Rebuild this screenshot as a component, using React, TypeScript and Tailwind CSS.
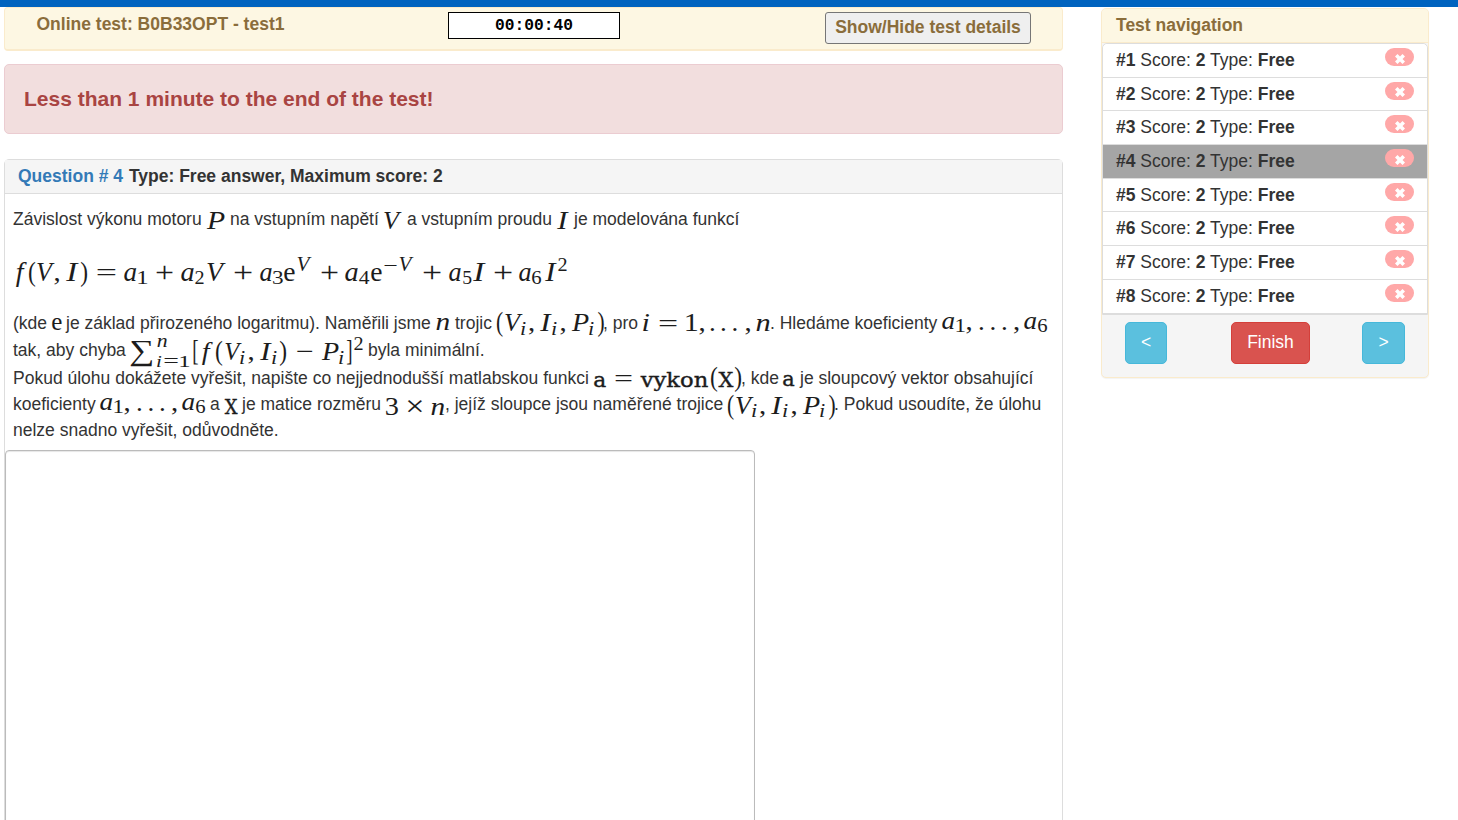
import React from "react";

type Face = "i" | "r" | "t";
/** [characters, left edge, right edge, offset below the row's baseline, font size, face] */
type Glyph = [string, number, number, number, number, Face];
type Segment = { x: number; text?: string; glyphs?: Glyph[] };

/** Ink extents of each character in thousandths of an em: [left, right]. */
const INK: Record<string, [number, number]> = {
  ia: [17, 476], if: [-100, 400], in: [14, 474], ii: [49, 264], iV: [76, 688], iI: [-8, 384], iP: [0, 605],
  re: [25, 424], "r(": [48, 304], "r)": [29, 285], "r[": [88, 299], "r]": [34, 245],
  r1: [111, 394], r2: [30, 475], r3: [43, 431], r4: [12, 472], r5: [32, 438], r6: [34, 468],
  "r,": [56, 195], "r.": [70, 181], "r=": [30, 534], "r+": [30, 534], "r−": [30, 534], "r×": [80, 490],
  "r∑": [14, 695], ta: [40, 590], tX: [20, 690], tvykon: [10, 3010],
};

const FACES: Record<Face, string> = {
  i: "font-['Liberation_Serif',serif] italic",
  r: "font-['Liberation_Serif',serif]",
  t: "font-['DejaVu_Serif',serif] stroke-[#1c1c1c] [stroke-width:0.4]",
};

function Formula({ x, width, glyphs }: { x: number; width: number; glyphs: Glyph[] }) {
  return (
    <svg width={width} height="25" viewBox={`${x} 0 ${width} 25`} className="block shrink-0 overflow-visible fill-[#1c1c1c]">
      {glyphs.map(([t, x0, x1, dy, size, face], i) => {
        const [l, r] = INK[face + t];
        const s = (x1 - x0) / (((r - l) * size) / 1000);
        return (
          <text
            key={i}
            className={FACES[face]}
            fontSize={size}
            transform={`translate(${x0 - (l * size * s) / 1000} ${18.5 + dy}) scale(${s} 1)`}
          >
            {t}
          </text>
        );
      })}
    </svg>
  );
}

function Row({ segments, className }: { segments: Segment[]; className: string }) {
  return (
    <div className={`flex whitespace-nowrap leading-[25px] ${className}`}>
      {segments.map((s, i) => {
        const width = (segments[i + 1]?.x ?? 1062) - s.x;
        return s.glyphs ? (
          <Formula key={i} x={s.x} width={width} glyphs={s.glyphs} />
        ) : (
          <span key={i} className="block shrink-0" style={{ width }}>
            {s.text}
          </span>
        );
      })}
    </div>
  );
}

/** The triple (V_i, I_i, P_i) starting at column x. */
const triple = (x: number, dy: number): Glyph[] => [
  ["(", x, x + 5.5, dy, 27, "r"], ["V", x + 9, x + 25, dy, 26, "i"], ["i", x + 24, x + 28.8, dy + 3.5, 18, "i"],
  [",", x + 32.5, x + 36.5, dy, 26, "r"], ["I", x + 43, x + 55, dy, 26, "i"], ["i", x + 55, x + 59.8, dy + 3.5, 18, "i"],
  [",", x + 64, x + 68, dy, 26, "r"], ["P", x + 75, x + 92, dy, 26, "i"], ["i", x + 92, x + 96.8, dy + 3.5, 18, "i"],
  [")", x + 101, x + 106.5, dy, 27, "r"],
];

/** The sequence a_1, . . . , a_6 starting at column x. */
const coefficients = (x: number): Glyph[] => [
  ["a", x, x + 12.5, -0.5, 26, "i"], ["1", x + 15, x + 21.5, 2.5, 18, "r"], [",", x + 25, x + 29, 0, 26, "r"],
  [".", x + 38, x + 41, 0, 26, "r"], [".", x + 49.5, x + 52.5, 0, 26, "r"], [".", x + 61, x + 64, 0, 26, "r"],
  [",", x + 72.5, x + 76.5, 0, 26, "r"], ["a", x + 82, x + 94.5, -0.5, 26, "i"], ["6", x + 96, x + 105, 2.5, 18, "r"],
];

const intro: Segment[] = [
  { x: 13, text: "Závislost výkonu motoru" },
  { x: 206, glyphs: [["P", 207, 225, 3.5, 26, "i"]] },
  { x: 230, text: "na vstupním napětí" },
  { x: 383, glyphs: [["V", 385, 401, 3.5, 26, "i"]] },
  { x: 407, text: "a vstupním proudu" },
  { x: 556, glyphs: [["I", 557, 569, 3.5, 26, "i"]] },
  { x: 574, text: "je modelována funkcí" },
];

const equation: Segment[] = [
  {
    x: 13,
    glyphs: [
      ["f", 13, 27, 0, 27, "i"], ["(", 29, 35, 0, 28, "r"], ["V", 38, 54, 0, 27, "i"], [",", 55, 59, 0, 26, "r"],
      ["I", 66, 79, 0, 27, "i"], [")", 81, 87, 0, 28, "r"], ["=", 97, 116, 0, 26, "r"],
      ["a", 124, 136.5, 0, 27, "i"], ["1", 139, 146, 3, 18, "r"], ["+", 156, 173, 1, 30, "r"],
      ["a", 181, 194, 0, 27, "i"], ["2", 195, 204, 3, 18, "r"], ["V", 208, 225, 0, 27, "i"], ["+", 234, 252, 1, 30, "r"],
      ["a", 260, 272, 0, 27, "i"], ["3", 273, 282, 3, 18, "r"], ["e", 284, 295, 0, 27, "r"], ["V", 298, 311, -9.5, 20, "i"],
      ["+", 321, 338, 1, 30, "r"], ["a", 345, 358, 0, 27, "i"], ["4", 359, 369, 3, 18, "r"], ["e", 371, 382, 0, 27, "r"],
      ["−", 384, 397, -8.5, 20, "r"], ["V", 400, 413, -9.5, 20, "i"], ["+", 423, 441, 1, 30, "r"],
      ["a", 449, 461, 0, 27, "i"], ["5", 463, 471, 3, 18, "r"], ["I", 473, 486, 0, 27, "i"], ["+", 494, 512, 1, 30, "r"],
      ["a", 519, 531, 0, 27, "i"], ["6", 532, 541, 3, 18, "r"], ["I", 545, 557, 0, 27, "i"], ["2", 558, 567, -9.5, 18, "r"],
    ],
  },
];

const measurements: Segment[] = [
  { x: 13, text: "(kde" },
  { x: 51, glyphs: [["e", 52, 62, 0.5, 26, "r"]] },
  { x: 66, text: "je základ přirozeného logaritmu). Naměřili jsme" },
  { x: 435, glyphs: [["n", 436, 449.5, 0.5, 26, "i"]] },
  { x: 455, text: "trojic" },
  { x: 496, glyphs: triple(497, 1.5) },
  { x: 603, text: ", pro" },
  {
    x: 642,
    glyphs: [
      ["i", 643, 649.5, 1.5, 26, "i"], ["=", 659, 677, 2, 26, "r"], ["1", 687, 695.5, 1.5, 26, "r"], [",", 700, 704, 1.5, 26, "r"],
      [".", 711, 714, 1.5, 26, "r"], [".", 722, 725, 1.5, 26, "r"], [".", 733.5, 736.5, 1.5, 26, "r"],
      [",", 746, 750, 1.5, 26, "r"], ["n", 756, 770, 1.5, 26, "i"],
    ],
  },
  { x: 770, text: ". Hledáme koeficienty" },
  { x: 942, glyphs: coefficients(942) },
];

const errorSum: Segment[] = [
  { x: 13, text: "tak, aby chyba" },
  {
    x: 130,
    glyphs: [
      ["∑", 130, 154, 3.5, 29, "r"], ["n", 157, 167, -10, 18, "i"], ["i", 157, 161.5, 10, 17, "i"], ["=", 164, 178, 10, 18, "r"],
      ["1", 181, 188, 10, 17, "r"], ["[", 194, 198, 3.5, 29, "r"], ["f", 199, 213, 3.5, 26, "i"], ["(", 216, 222, 3.5, 27, "r"],
      ["V", 226, 241, 3.5, 26, "i"], ["i", 240, 244.8, 7, 18, "i"], [",", 249, 253, 3.5, 26, "r"], ["I", 260, 272, 3.5, 26, "i"],
      ["i", 272, 276.8, 7, 18, "i"], [")", 280, 286, 3.5, 27, "r"], ["−", 297, 313, 3.5, 26, "r"], ["P", 322, 339, 3.5, 26, "i"],
      ["i", 339, 343.8, 7, 18, "i"], ["]", 347, 351, 3.5, 29, "r"], ["2", 354, 363, -7, 18, "r"],
    ],
  },
  { x: 368, text: "byla minimální." },
];

const task: Segment[] = [
  { x: 13, text: "Pokud úlohu dokážete vyřešit, napište co nejjednodušší matlabskou funkci" },
  {
    x: 593,
    glyphs: [
      ["a", 594, 606, 2.5, 21, "t"], ["=", 615, 632, 2, 26, "r"], ["vykon", 641, 709, 2.5, 21, "t"], ["(", 711, 717, 1.5, 27, "r"],
      ["X", 719, 733, 2.5, 21, "t"], [")", 735, 741, 1.5, 27, "r"],
    ],
  },
  { x: 741, text: ", kde" },
  { x: 782, glyphs: [["a", 783, 794.5, 1, 21, "t"]] },
  { x: 800, text: "je sloupcový vektor obsahující" },
];

const matrix: Segment[] = [
  { x: 13, text: "koeficienty" },
  { x: 100, glyphs: coefficients(100) },
  { x: 210, text: "a" },
  { x: 224, glyphs: [["X", 225, 237, 3, 21, "t"]] },
  { x: 242, text: "je matice rozměru" },
  { x: 385, glyphs: [["3", 386, 397, 4, 26, "r"], ["×", 408, 422, 5, 30, "r"], ["n", 431, 444.5, 4.5, 26, "i"]] },
  { x: 445, text: ", jejíž sloupce jsou naměřené trojice" },
  { x: 727, glyphs: triple(728, 3) },
  { x: 834, text: ". Pokud usoudíte, že úlohu" },
];

const questions = [1, 2, 3, 4, 5, 6, 7, 8];

function RemoveBadge() {
  return (
    <span className="mt-1 flex h-[18px] w-[29px] items-center justify-center rounded-full bg-[#ffa8a8] pt-[3px]">
      <svg width="10" height="10" viewBox="0 0 10 10" className="fill-white">
        <path d="M2.5 0 5 2.5 7.5 0 10 2.5 7.5 5 10 7.5 7.5 10 5 7.5 2.5 10 0 7.5 2.5 5 0 2.5Z" />
      </svg>
    </span>
  );
}

export default function App() {
  return (
    <div className="h-[820px] w-[1458px] overflow-hidden bg-white font-['Liberation_Sans',Arial,sans-serif] text-[17.5px] text-[#333]">
      <div className="h-[7px] bg-[#0063bf]" />
      <div className="flex items-start pl-1">
        <main className="w-[1059px]">
          <header className="flex h-[44px] items-start rounded-[4px] border border-b-2 border-[#faebcc] bg-[#fdf7e3] font-bold text-[#8a6d3b]">
            <div className="w-[443px] pl-[31.5px] pt-[4px] leading-[25px]">Online test: B0B33OPT - test1</div>
            <div className="mt-[4px] h-[27px] w-[172px] border border-black bg-white text-center font-['Liberation_Mono',monospace] text-[16.25px] leading-[26px] text-black">
              00:00:40
            </div>
            <button className="ml-[205px] mt-[4px] h-8 w-[206px] whitespace-nowrap rounded-[3px] border border-[#767676] bg-[#efefef] pb-[2px] text-center leading-[28px]">
              Show/Hide test details
            </button>
          </header>

          <div className="mt-[13px] h-[70px] rounded-[5px] border border-[#ebccd1] bg-[#f2dede] pl-[19px] text-[21px] font-bold leading-[68px] text-[#a94442]">
            Less than 1 minute to the end of the test!
          </div>

          <section className="mt-[25px] h-[680px] rounded-t-[5px] border border-[#ddd]">
            <h2 className="h-[34px] border-b border-[#ddd] bg-[#f5f5f5] pl-[13px] font-bold leading-[32px]">
              <span className="mr-px text-[#337ab7]">Question # 4</span> Type: Free answer, Maximum score: 2
            </h2>
            <div className="pl-2 pt-[13px]">
              <Row segments={intro} className="h-[55px]" />
              <Row segments={equation} className="h-[49px]" />
              <Row segments={measurements} className="h-[27px]" />
              <Row segments={errorSum} className="h-[28px]" />
              <Row segments={task} className="h-[26px]" />
              <Row segments={matrix} className="h-[26px]" />
              <p className="h-[32px] leading-[25px]">nelze snadno vyřešit, odůvodněte.</p>
            </div>
            <textarea className="block h-[420px] w-[750px] resize-none rounded-[4px] border border-[#bbb] bg-white shadow-[inset_0_1px_1px_rgba(0,0,0,0.1)]" />
          </section>
        </main>

        <aside className="ml-[38px] mt-px h-[370px] w-[328px] overflow-hidden rounded-[5px] border border-[#faebcc] bg-[#f5f5f5] shadow-[0_1px_1px_rgba(0,0,0,0.05)]">
          <h2 className="h-[34px] border-b border-[#faebcc] bg-[#fdf7e3] pl-[14px] font-bold leading-[32px] text-[#8a6d3b]">
            Test navigation
          </h2>
          <ul className="h-[272px] rounded-t-[5px] border border-[#ddd] bg-white">
            {questions.map((n) => (
              <li
                key={n}
                className={`flex h-[33.7px] items-start justify-between border-b border-[#ddd] pl-[13px] pr-[13px] ${
                  n === 4 ? "bg-[#a5a5a5]" : "bg-white"
                } ${n === 1 ? "rounded-t-[5px]" : ""}`}
              >
                <span className="leading-[33px]">
                  <b>#{n}</b> Score: <b>2</b> Type: <b>Free</b>
                </span>
                <RemoveBadge />
              </li>
            ))}
          </ul>
          <div className="flex items-start pl-[23px] pt-[7px] text-center leading-[38px] text-white">
            <button className="h-[42px] w-[42px] rounded-[5px] border border-[#46b8da] bg-[#5bc0de] pb-[2px]">&lt;</button>
            <button className="ml-16 h-[42px] w-[79px] rounded-[5px] border border-[#d43f3a] bg-[#d9534f] pb-[2px]">Finish</button>
            <button className="ml-[52px] h-[42px] w-[43px] rounded-[5px] border border-[#46b8da] bg-[#5bc0de] pb-[2px]">&gt;</button>
          </div>
        </aside>
      </div>
    </div>
  );
}
